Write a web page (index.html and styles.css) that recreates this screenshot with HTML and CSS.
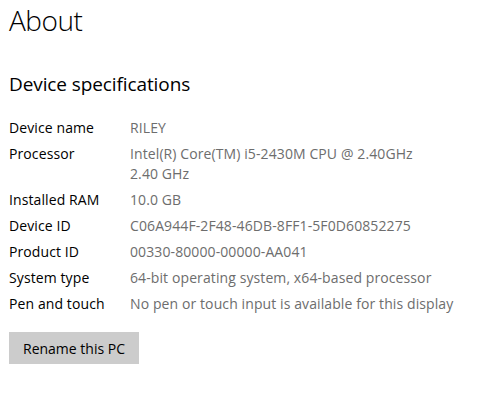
FILE: index.html
```html
<!DOCTYPE html>
<html lang="en">
<head>
    <meta charset="UTF-8">
    <meta name="viewport" content="width=device-width, initial-scale=1.0">
    <title>About</title>
    <link rel="stylesheet" href="styles.css">
</head>
<body>
    <div class="page">
        <h1>About</h1>

        <h2>Device specifications</h2>

        <div class="specs">
            <div class="label">Device name</div>
            <div class="value">RILEY</div>

            <div class="label">Processor</div>
            <div class="value">Intel(R) Core(TM) i5-2430M CPU @ 2.40GHz<br>2.40 GHz</div>

            <div class="label">Installed RAM</div>
            <div class="value">10.0 GB</div>

            <div class="label">Device ID</div>
            <div class="value">C06A944F-2F48-46DB-8FF1-5F0D60852275</div>

            <div class="label">Product ID</div>
            <div class="value">00330-80000-00000-AA041</div>

            <div class="label">System type</div>
            <div class="value">64-bit operating system, x64-based processor</div>

            <div class="label">Pen and touch</div>
            <div class="value">No pen or touch input is available for this display</div>
        </div>

        <button class="btn-rename">Rename this PC</button>
    </div>
</body>
</html>
```

FILE: styles.css
```css
body {
    font-family: "Open Sans", "Noto Sans", sans-serif;
    margin: 0;
    background-color: #fff;
    color: #000;
}
.page {
    padding: 0 9px;
}
h1 {
    font-size: 28px;
    font-weight: 300;
    line-height: 40px;
    margin: 0;
    letter-spacing: -0.5px;
}
h2 {
    font-size: 19px;
    font-weight: 400;
    line-height: 28px;
    margin: 30px 0 20px;
    letter-spacing: -0.1px;
}
.specs {
    display: grid;
    grid-template-columns: 121px 1fr;
    row-gap: 6px;
    font-size: 14px;
    line-height: 20px;
    letter-spacing: 0.1px;
}
.value {
    color: #6d6d6d;
}
.btn-rename {
    display: block;
    margin-top: 18px;
    height: 32px;
    padding: 0 14px;
    font-family: inherit;
    font-size: 14px;
    color: #000;
    background-color: #ccc;
    border: none;
    cursor: pointer;
}
```
